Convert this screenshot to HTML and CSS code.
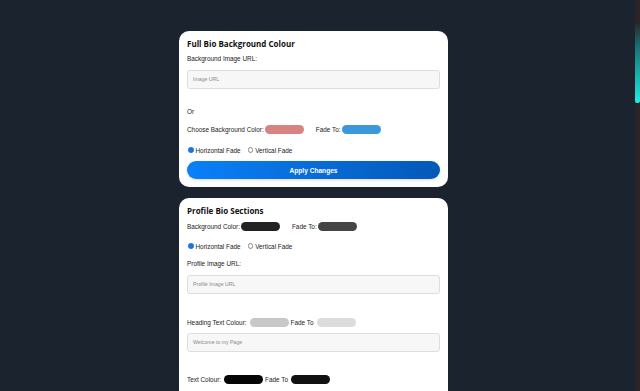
FILE: index.html
```html
<!DOCTYPE html>
<html lang="en">
<head>
    <meta charset="UTF-8">
    <meta name="viewport" content="width=device-width, initial-scale=1.0">
    <title>Bio Settings</title>
    <link rel="stylesheet" href="styles.css">
</head>
<body>

    <!-- Settings Column -->
    <div class="settings">

        <!-- Full Bio Background -->
        <div class="card">
            <h2>Full Bio Background Colour</h2>
            <label class="label">Background Image URL:</label>
            <div class="text-input">Image URL</div>

            <p class="or">Or</p>

            <div class="colour-row first-row">
                <span>Choose Background Color:</span>
                <span class="swatch" style="background-color: #d98282;"></span>
                <span class="fade-label">Fade To:</span>
                <span class="swatch" style="background-color: #3b98da;"></span>
            </div>

            <div class="radio-row">
                <span class="radio checked"></span><span>Horizontal Fade</span>
                <span class="radio"></span><span>Vertical Fade</span>
            </div>

            <button class="apply-btn">Apply Changes</button>
        </div>

        <!-- Profile Bio Sections -->
        <div class="card">
            <h2>Profile Bio Sections</h2>

            <div class="colour-row">
                <span>Background Color:</span>
                <span class="swatch" style="background-color: #222222;"></span>
                <span class="fade-label">Fade To:</span>
                <span class="swatch" style="background-color: #454545;"></span>
            </div>

            <div class="radio-row">
                <span class="radio checked"></span><span>Horizontal Fade</span>
                <span class="radio"></span><span>Vertical Fade</span>
            </div>

            <label class="label">Profile Image URL:</label>
            <div class="text-input">Profile Image URL</div>

            <div class="colour-row spaced">
                <span>Heading Text Colour:</span>
                <span class="swatch" style="background-color: #c8c8c8;"></span>
                <span>Fade To</span>
                <span class="swatch" style="background-color: #dcdcdc;"></span>
            </div>
            <div class="text-input">Welcome to my Page</div>

            <div class="colour-row spaced tight">
                <span>Text Colour:</span>
                <span class="swatch" style="background-color: #050505;"></span>
                <span>Fade To</span>
                <span class="swatch" style="background-color: #111111;"></span>
            </div>
            <div class="text-input bio-input">Tell people a little about yourself</div>

            <div class="colour-row spaced tight">
                <span>Link Colour:</span>
                <span class="swatch" style="background-color: #3b98da;"></span>
                <span>Fade To</span>
                <span class="swatch" style="background-color: #0558b8;"></span>
            </div>

            <button class="apply-btn">Apply Changes</button>
        </div>

    </div>

    <!-- Page scrollbar -->
    <div class="scroll-track"><div class="scroll-thumb"></div></div>

</body>
</html>
```

FILE: styles.css
```css
/* General Styles */
html {
    background-color: #1b242e;
}

body {
    font-family: 'Liberation Sans', Arial, sans-serif;
    font-size: 6.4px;
    color: #222;
    margin: 0;
    padding: 31px 13px 900px 0;
}

/* Scrollbar drawn over the right edge */
.scroll-track {
    position: fixed;
    top: 0;
    right: 0;
    width: 5px;
    height: 100%;
    background-color: #2a2527;
}

.scroll-thumb {
    height: 103px;
    border-radius: 0 0 2px 2px;
    background: linear-gradient(to bottom, #2a2527 22%, #1b6f72 45%, #16c2bb 80%, #22ece3);
}

/* Settings Column */
.settings {
    width: 269px;
    margin: 0 auto;
    display: flex;
    flex-direction: column;
    gap: 11px;
}

.card {
    background-color: #fff;
    border-radius: 10px;
    padding: 8px;
    display: flex;
    flex-direction: column;
}

h2 {
    font-family: 'Open Sans', sans-serif;
    font-size: 8px;
    font-weight: 700;
    line-height: 10px;
    margin: 0;
    color: #111;
}

.label {
    display: block;
    line-height: 8px;
    margin-top: 6px;
}

.card .radio-row + .label {
    margin-top: 10px;
}

.text-input {
    height: 17px;
    margin-top: 7px;
    padding: 0 5px;
    border: 1px solid #dedede;
    border-radius: 3px;
    background-color: #f7f7f7;
    color: #8a8a8a;
    font-size: 5.2px;
    line-height: 17px;
}

.text-input.bio-input {
    margin-top: 14px;
}

.or {
    margin: 19px 0 0;
    line-height: 8px;
}

/* Colour pickers */
.colour-row {
    display: flex;
    align-items: center;
    height: 8px;
    margin-top: 6px;
}

.first-row {
    margin-top: 9px;
}

.colour-row.spaced {
    margin-top: 24px;
    gap: 2px;
}

.colour-row.tight {
    margin-top: 23px;
}

.swatch {
    width: 39px;
    height: 9px;
    border-radius: 5px;
    margin-left: 1px;
}

.fade-label {
    margin-left: 12px;
}

/* Radios */
.radio-row {
    display: flex;
    align-items: center;
    height: 8px;
    margin-top: 12px;
}

.first-row + .radio-row {
    margin-top: 13px;
}

.radio {
    width: 3.5px;
    height: 3.5px;
    border: 0.7px solid #888;
    border-radius: 50%;
    margin: 0 2px 0 1px;
}

.radio + span + .radio {
    margin-left: 7px;
}

.radio.checked {
    background-color: #1a73e8;
    border-color: #1a73e8;
}

/* Button */
.apply-btn {
    margin-top: 7px;
    height: 18px;
    border: none;
    border-radius: 9px;
    background: linear-gradient(to right, #0a80f8, #0558b8);
    color: #fff;
    font-family: 'Liberation Sans', Arial, sans-serif;
    font-size: 6.6px;
    font-weight: 700;
    box-shadow: 0 1px 3px rgba(0, 0, 0, 0.15);
    cursor: pointer;
}
```
